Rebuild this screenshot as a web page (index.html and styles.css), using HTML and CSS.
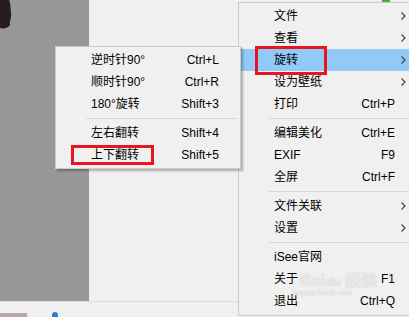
FILE: index.html
```html
<!DOCTYPE html>
<html lang="zh-CN">
<head>
    <meta charset="UTF-8">
    <meta name="viewport" content="width=device-width, initial-scale=1.0">
    <title>iSee 右键菜单</title>
    <link rel="stylesheet" href="styles.css">
</head>
<body>
    <div class="screen">
        <div class="viewer">
            <div class="photo">
                <svg class="blob" width="12" height="30" viewBox="0 0 12 30">
                    <path d="M0 0 H9 C11 4 10 8 11 12 C12 17 9 21 10 25 C8 28 4 29 0 28 Z" fill="#261b1b"/>
                </svg>
            </div>
            <div class="canvas"></div>
        </div>
        <div class="strip">
            <span class="thumb"></span>
            <span class="pin"></span>
        </div>
        <span class="top-tab"></span>

        <div class="watermark">
            <span class="wm-logo">Bai<b>du</b> 经验</span>
            <span class="wm-url">jingyan.baidu.com</span>
        </div>

        <!-- 主菜单 -->
        <ul class="menu main-menu">
            <li><span class="label">文件</span><span class="arrow"><svg width="5" height="8" viewBox="0 0 5 8"><path d="M0.5 0.5 L4 4 L0.5 7.5" fill="none" stroke="#444" stroke-width="1.2"/></svg></span></li>
            <li><span class="label">查看</span><span class="arrow"><svg width="5" height="8" viewBox="0 0 5 8"><path d="M0.5 0.5 L4 4 L0.5 7.5" fill="none" stroke="#444" stroke-width="1.2"/></svg></span></li>
            <li class="active"><span class="label">旋转</span><span class="arrow"><svg width="5" height="8" viewBox="0 0 5 8"><path d="M0.5 0.5 L4 4 L0.5 7.5" fill="none" stroke="#444" stroke-width="1.2"/></svg></span></li>
            <li><span class="label">设为壁纸</span><span class="arrow"><svg width="5" height="8" viewBox="0 0 5 8"><path d="M0.5 0.5 L4 4 L0.5 7.5" fill="none" stroke="#444" stroke-width="1.2"/></svg></span></li>
            <li><span class="label">打印</span><span class="key">Ctrl+P</span><span class="arrow"></span></li>
            <li class="sep"></li>
            <li><span class="label">编辑美化</span><span class="key">Ctrl+E</span><span class="arrow"></span></li>
            <li><span class="label">EXIF</span><span class="key">F9</span><span class="arrow"></span></li>
            <li><span class="label">全屏</span><span class="key">Ctrl+F</span><span class="arrow"></span></li>
            <li class="sep"></li>
            <li><span class="label">文件关联</span><span class="arrow"><svg width="5" height="8" viewBox="0 0 5 8"><path d="M0.5 0.5 L4 4 L0.5 7.5" fill="none" stroke="#444" stroke-width="1.2"/></svg></span></li>
            <li><span class="label">设置</span><span class="arrow"><svg width="5" height="8" viewBox="0 0 5 8"><path d="M0.5 0.5 L4 4 L0.5 7.5" fill="none" stroke="#444" stroke-width="1.2"/></svg></span></li>
            <li class="sep"></li>
            <li><span class="label">iSee官网</span><span class="arrow"></span></li>
            <li><span class="label">关于</span><span class="key">F1</span><span class="arrow"></span></li>
            <li><span class="label">退出</span><span class="key">Ctrl+Q</span><span class="arrow"></span></li>
        </ul>

        <!-- 旋转子菜单 -->
        <ul class="menu sub-menu">
            <li><span class="label">逆时针90°</span><span class="key">Ctrl+L</span></li>
            <li><span class="label">顺时针90°</span><span class="key">Ctrl+R</span></li>
            <li><span class="label">180°旋转</span><span class="key">Shift+3</span></li>
            <li class="sep"></li>
            <li><span class="label">左右翻转</span><span class="key">Shift+4</span></li>
            <li><span class="label">上下翻转</span><span class="key">Shift+5</span></li>
        </ul>

        <!-- 红框标注 -->
        <div class="mark mark-rotate"></div>
        <div class="mark mark-flip"></div>
    </div>
</body>
</html>
```

FILE: styles.css
```css
/* 截图区域 */

body {
    margin: 0;
    font-family: "Liberation Sans", "Noto Sans CJK SC", sans-serif;
    font-size: 12px;
    color: #000;
}
.screen {
    position: relative;
    width: 409px;
    height: 317px;
    overflow: hidden;
    background: #f0f0f0;
}
.viewer {
    display: grid;
    grid-template-columns: 89px 1fr;
    height: 301px;
}
.photo {
    background: #979797;
}
.blob {
    display: block;
}
.canvas {
    background: #f0f0f0;
}
.strip {
    display: flex;
    align-items: flex-end;
    gap: 25px;
    height: 15px;
    border-top: 1px solid #dcdcdc;
    background: #f0f0f0;
}
.thumb {
    width: 27px;
    height: 4px;
    background: #b9aaa6;
}
.pin {
    width: 6px;
    height: 5px;
    background: #2f7fd0;
    border-radius: 3px 3px 0 0;
}
.top-tab {
    position: absolute;
    left: 382px;
    top: 0;
    width: 8px;
    height: 2px;
    background: #3fae3f;
}

/* 菜单 */

.menu {
    position: absolute;
    margin: 0;
    padding: 2px 0;
    list-style: none;
    background: #f0f0f0;
    border: 1px solid #cccccc;
}
.menu li {
    display: flex;
    align-items: center;
    height: 22px;
    padding-left: 35px;
    line-height: 14px;
    white-space: nowrap;
}
.menu li.sep {
    height: 7px;
    padding: 0;
    margin-left: 30px;
    background: linear-gradient(#d7d7d7, #d7d7d7) 0 3px / 100% 1px no-repeat;
}
.menu .label {
    flex: 1;
}
.main-menu {
    left: 238px;
    top: 2px;
    width: 180px;
    padding-bottom: 3px;
}
.main-menu li.active {
    margin-left: 1px;
    padding-left: 34px;
    background: #91c9f7;
}
.main-menu .arrow {
    display: flex;
    align-items: center;
    width: 24px;
    padding-left: 6px;
    box-sizing: border-box;
}
.sub-menu {
    left: 55px;
    top: 46px;
    width: 184px;
    box-shadow: 2px 2px 2px rgba(0, 0, 0, 0.28);
}
.sub-menu li {
    padding-right: 21px;
}
.sub-menu li.sep {
    margin-right: 2px;
}

/* 标注 */

.mark {
    position: absolute;
    border: 3px solid #e8141f;
}
.mark-rotate {
    left: 255px;
    top: 46px;
    width: 66px;
    height: 23px;
}
.mark-flip {
    left: 71px;
    top: 145px;
    width: 77px;
    height: 14px;
}

/* 水印 */

.watermark {
    position: absolute;
    left: 292px;
    top: 273px;
    z-index: 2;
    display: flex;
    flex-direction: column;
    align-items: flex-start;
    color: rgba(255, 255, 255, 0.7);
    text-shadow: 0 0 1px rgba(110, 110, 110, 0.45);
    pointer-events: none;
}
.wm-logo {
    margin-left: 8px;
    font-size: 16px;
    line-height: 15px;
    font-weight: bold;
}
.wm-logo b {
    font-size: 13px;
}
.wm-url {
    font-family: "Liberation Serif", serif;
    font-size: 8px;
    line-height: 8px;
}
```
